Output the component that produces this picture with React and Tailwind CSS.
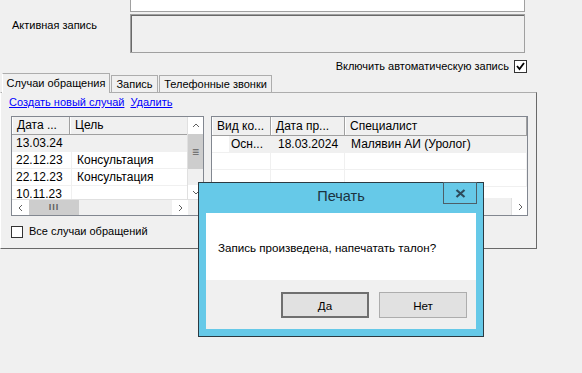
import React from 'react';

const font = { fontFamily: '"Liberation Sans", Arial, sans-serif' };

function Chevron({ dir }) {
  const pts = {
    up: '2,6 5,3 8,6',
    down: '2,4 5,7 8,4',
    left: '6,2 3,5 6,8',
    right: '4,2 7,5 4,8',
  }[dir];
  return (
    <svg width="10" height="10" viewBox="0 0 10 10">
      <polyline points={pts} fill="none" stroke="#606060" strokeWidth="1" />
    </svg>
  );
}

function Check({ checked }) {
  return (
    <div className="w-[13px] h-[13px] border border-[#333] bg-white flex items-center justify-center shrink-0">
      {checked && (
        <svg width="9" height="9" viewBox="0 0 9 9">
          <polyline points="1,4 3.5,7 8,1" fill="none" stroke="#000" strokeWidth="1.8" />
        </svg>
      )}
    </div>
  );
}

function Cell({ w, children, className = '' }) {
  return (
    <div className={`shrink-0 border-r border-[#f0f0f0] h-full flex items-center truncate ${className}`} style={{ width: w }}>
      {children}
    </div>
  );
}

function HeadCell({ w, children }) {
  return (
    <div className="shrink-0 h-full flex items-center pl-[4px] border-r border-[#a0a0a0] border-l border-l-white bg-[#f0f0f0]" style={{ width: w }}>
      {children}
    </div>
  );
}

function LeftGrid() {
  const rows = [
    ['13.03.24', '', true],
    ['22.12.23', 'Консультация'],
    ['22.12.23', 'Консультация'],
    ['10.11.23', ''],
  ];
  return (
    <div className="ml-[10px] w-[193px] h-[100px] border border-[#828790] bg-white flex flex-col text-[12px]">
      <div className="flex h-[82px]">
        <div className="w-[176px] flex flex-col overflow-hidden">
          <div className="flex h-[18px] border-b border-[#a0a0a0] shrink-0">
            <HeadCell w={58}>Дата ...</HeadCell>
            <HeadCell w={118}>Цель</HeadCell>
          </div>
          {rows.map((r, i) => (
            <div key={i} className={`flex h-[17px] shrink-0 border-b border-[#f0f0f0] ${r[2] ? 'bg-[#f0f0f0]' : 'bg-white'}`}>
              <Cell w={60} className="pl-[4px]">{r[0]}</Cell>
              <Cell w={116} className="pl-[5px]">{r[1]}</Cell>
            </div>
          ))}
        </div>
        <div className="w-[16px] flex flex-col bg-[#f0f0f0] border-l border-[#e0e0e0]">
          <div className="h-[17px] flex items-center justify-center bg-white"><Chevron dir="up" /></div>
          <div className="h-[35px] bg-[#cdcdcd] flex items-center justify-center text-[#606060] text-[12px] leading-none">≡</div>
          <div className="flex-1 bg-[#f0f0f0]" />
          <div className="h-[14px] flex items-center justify-center bg-white"><Chevron dir="down" /></div>
        </div>
      </div>
      <div className="flex h-[17px] bg-[#f0f0f0] border-t border-[#e0e0e0]">
        <div className="w-[17px] flex items-center justify-center bg-white"><Chevron dir="left" /></div>
        <div className="w-[50px] bg-[#cdcdcd] flex items-center justify-center text-[#606060] text-[9px] font-bold tracking-[1px]">III</div>
        <div className="w-[93px] bg-[#f0f0f0]" />
        <div className="w-[16px] flex items-center justify-center bg-white"><Chevron dir="right" /></div>
        <div className="flex-1 bg-[#f0f0f0]" />
      </div>
    </div>
  );
}

function RightGrid() {
  const rows = [
    ['Осн...', '18.03.2024', 'Малявин АИ (Уролог)', true],
    ['', '', ''],
    ['', '', ''],
  ];
  return (
    <div className="ml-[7px] w-[317px] h-[100px] border border-[#828790] bg-white flex flex-col text-[12px]">
      <div className="flex-1 flex flex-col overflow-hidden">
        <div className="flex h-[19px] border-b border-[#a0a0a0] shrink-0">
          <HeadCell w={59}>Вид ко...</HeadCell>
          <HeadCell w={74}>Дата пр...</HeadCell>
          <HeadCell w={182}>Специалист</HeadCell>
        </div>
        {rows.map((r, i) => (
          <div key={i} className={`flex h-[17px] shrink-0 border-b border-[#f0f0f0] ${r[3] ? 'bg-[#f0f0f0]' : 'bg-white'}`}>
            <Cell w={59} className="pl-[19px] relative">
              {r[3] && <div className="absolute left-0 top-0 w-[17px] h-full bg-white" />}
              <span className="relative">{r[0]}</span>
            </Cell>
            <Cell w={74} className="pl-[7px]">{r[1]}</Cell>
            <Cell w={182} className="pl-[6px]">{r[2]}</Cell>
          </div>
        ))}
      </div>
      <div className="flex h-[17px] bg-[#f0f0f0]">
        <div className="flex-1" />
        <div className="w-[16px] flex items-center justify-center bg-white border-l border-[#e0e0e0]"><Chevron dir="right" /></div>
      </div>
    </div>
  );
}

function Dialog() {
  return (
    <div className="absolute left-[198px] top-[182px] w-[286px] h-[155px] bg-[#66c9e8] border border-[#2b3a42] flex flex-col">
      <div className="relative h-[30px] flex items-center justify-center pb-[3px] text-[14.5px] text-[#1b3240]">
        Печать
        <div className="absolute right-[6px] top-[-1px] w-[34px] h-[22px] border border-[#4d5f68] flex items-center justify-center">
          <svg width="11" height="9" viewBox="0 0 11 9">
            <path d="M1.5 1 L9.5 8 M9.5 1 L1.5 8" stroke="#2d4b5c" strokeWidth="2.2" />
          </svg>
        </div>
      </div>
      <div className="mx-[7px] flex flex-col">
        <div className="h-[67px] bg-white flex items-center pl-[12px] pt-[2px] text-[11.6px] text-black">
          Запись произведена, напечатать талон?
        </div>
        <div className="h-[49px] bg-[#f0f0f0] flex justify-end items-start pt-[12px] pr-[9px] gap-[10px] text-[11.6px]">
          <div className="w-[88px] h-[26px] border-2 border-[#6f6f6f] bg-[#e1e1e1] flex items-center justify-center">Да</div>
          <div className="w-[88px] h-[26px] border border-[#adadad] bg-[#e1e1e1] flex items-center justify-center">Нет</div>
        </div>
      </div>
    </div>
  );
}

export default function App() {
  return (
    <div className="relative w-[582px] h-[373px] bg-[#f0f0f0] overflow-hidden text-[11px] leading-[13px] text-black" style={font}>
      <div className="ml-[130px] w-[395px] h-[12px] bg-white border border-t-0 border-[#a0a0a0]" />
      <div className="flex mt-[2px]">
        <div className="w-[130px] pl-[12px] pt-[5px]">Активная запись</div>
        <div className="w-[395px] h-[39px] bg-[#f0f0f0] border border-[#a0a0a0] shadow-[inset_1px_1px_0_#696969]" />
      </div>
      <div className="flex justify-end items-center pr-[55px] mt-[7px] h-[13px] gap-[5px]">
        <span>Включить автоматическую запись</span>
        <Check checked />
      </div>
      <div className="flex items-end h-[19px] pl-[2px]">
        <div className="w-[108px] h-[20px] bg-[#f0f0f0] border border-b-0 border-[#adadad] border-l-white flex items-center justify-center relative top-[1px] z-10">Случаи обращения</div>
        <div className="w-[47px] h-[17px] ml-[1px] bg-[#f0f0f0] border border-b-0 border-[#adadad] flex items-center justify-center">Запись</div>
        <div className="w-[113px] h-[17px] ml-[1px] bg-[#f0f0f0] border border-b-0 border-[#adadad] flex items-center justify-center">Телефонные звонки</div>
      </div>
      <div className="w-[537px] h-[157px] border border-[#adadad] border-r-[#696969] border-b-[#696969] border-l-white">
        <div className="flex gap-[6px] pl-[8px] pt-[3px] h-[23px] text-[#0000ff] underline">
          <span>Создать новый случай</span>
          <span>Удалить</span>
        </div>
        <div className="flex">
          <LeftGrid />
          <RightGrid />
        </div>
        <div className="flex items-center gap-[6px] pl-[10px] mt-[9px]">
          <div className="w-[12px] h-[12px] border border-[#333] bg-white" />
          <span>Все случаи обращений</span>
        </div>
      </div>
      <Dialog />
    </div>
  );
}
